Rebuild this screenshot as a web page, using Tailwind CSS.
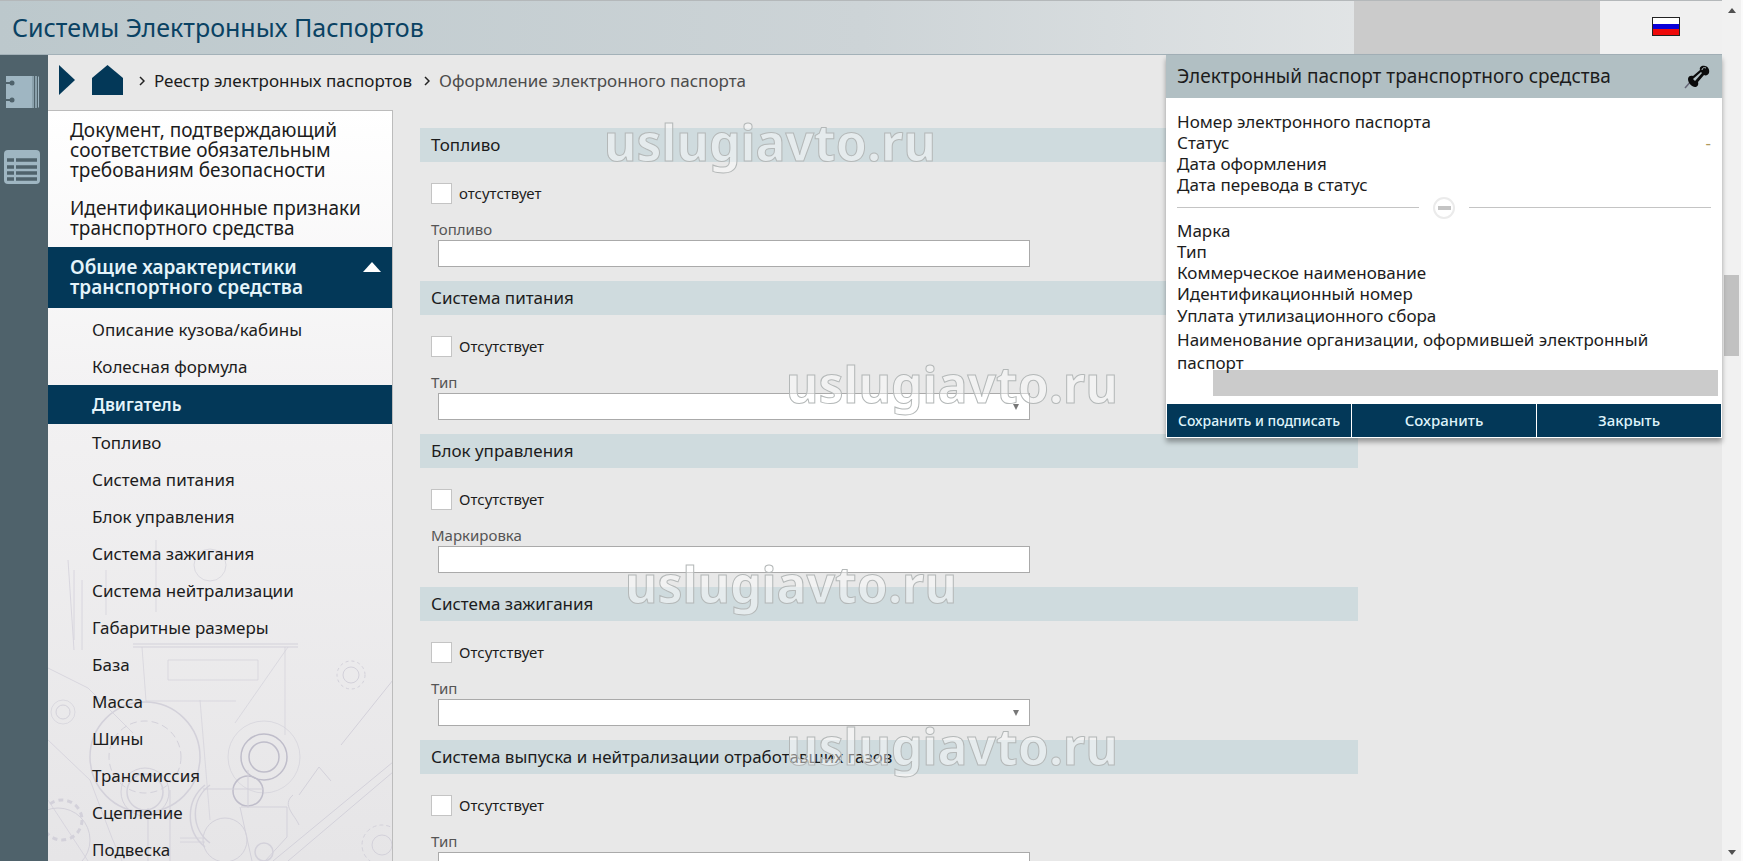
<!DOCTYPE html>
<html lang="ru">

<head>
  <meta charset="UTF-8">
  <meta name="viewport" content="width=device-width, initial-scale=1.0">
  <title>Системы Электронных Паспортов</title>
  <script src="https://cdn.jsdelivr.net/npm/@tailwindcss/browser@4"></script>
</head>

<body class="h-screen overflow-hidden bg-[#e8e8e8] font-['Noto_Sans','Open_Sans',sans-serif] text-[#1c1c1c]">
  <div class="relative flex h-full">
    <div class="flex min-w-0 flex-1 flex-col">

      <!-- Header -->
      <header class="flex h-[55px] shrink-0 border-t border-b border-t-[#b4b8ba] border-b-[#a3b1b8] bg-linear-to-r from-[#bcc8cc] via-[#cdd4d7] to-[#f0f0f0]">
        <h1 class="flex-1 pl-3 text-[25px] leading-[52px] text-[#0a4263]">Системы Электронных Паспортов</h1>
        <div class="w-[246px] bg-[#cbcbcb]"></div>
        <div class="flex w-[122px] bg-[#f0f0f0] pt-4 pl-[52px]">
          <button type="button" aria-label="Русский" class="flex h-[19px] w-7 flex-col border border-[#222]">
            <span class="w-full flex-1 bg-white"></span>
            <span class="w-full flex-1 bg-[#0a00d8]"></span>
            <span class="w-full flex-1 bg-[#ee0a0a]"></span>
          </button>
        </div>
      </header>

      <div class="flex min-h-0 flex-1">
        <!-- Icon rail -->
        <aside class="flex w-12 shrink-0 flex-col items-center gap-10 bg-[#4f626b] pt-[19px]">
          <button type="button" aria-label="Журнал" class="pr-1">
            <svg width="36" height="36" viewBox="0 0 36 36">
              <path d="M2 2h26v32H2z" fill="#9fb6c2" />
              <path d="M29 2v32M32 2v32" stroke="#9fb6c2" stroke-width="1.500" />
              <path d="M34 2.500h1v31h-1z" fill="#9fb6c2" />
              <path d="M1 9h7M1 26h7" stroke="#4f626b" stroke-width="2" />
              <circle cx="8" cy="9" r="2.500" fill="#4f626b" />
              <circle cx="8" cy="26" r="2.500" fill="#4f626b" />
            </svg>
          </button>
          <button type="button" aria-label="Реестр" class="pr-1">
            <svg width="36" height="34" viewBox="0 0 36 34">
              <rect x="0" y="0" width="36" height="34" rx="4" fill="#9fb6c2" />
              <path d="M3 10h7M3 17h7M3 23h7M3 29h7M12 10h21M12 17h21M12 23h21M12 29h21" stroke="#4f626b" stroke-width="3.500" />
            </svg>
          </button>
        </aside>

        <div class="flex min-w-0 flex-1 flex-col">
          <!-- Breadcrumbs -->
          <nav aria-label="Навигация" class="flex h-[55px] shrink-0 items-center pb-[6px] pl-[11px] text-[17px]">
            <button type="button" aria-label="Развернуть">
              <svg width="16" height="30" viewBox="0 0 16 30"><path d="M0 0l16 15L0 30z" fill="#033858" /></svg>
            </button>
            <a href="#" aria-label="Главная" class="ml-[17px]">
              <svg width="31" height="30" viewBox="0 0 31 30"><path d="M15.500 0L31 13v17H0V13z" fill="#033858" /></svg>
            </a>
            <svg class="mt-0.5 ml-4" width="6" height="10" viewBox="0 0 6 10" fill="none" stroke="#222" stroke-width="1.500"><path d="M1 1l4 4-4 4" /></svg>
            <a href="#" class="mt-0.5 ml-[9px]">Реестр электронных паспортов</a>
            <svg class="mt-0.5 ml-3" width="6" height="10" viewBox="0 0 6 10" fill="none" stroke="#222" stroke-width="1.500"><path d="M1 1l4 4-4 4" /></svg>
            <span class="mt-0.5 ml-[9px] text-[#4c4c4c]">Оформление электронного паспорта</span>
          </nav>

          <div class="flex min-h-0 flex-1">
            <!-- Side menu -->
            <nav aria-label="Разделы" class="relative w-[345px] shrink-0 overflow-hidden border-t border-r border-[#bcbcbc] bg-linear-to-b from-white via-[#f2f1f2] via-40% to-[#e6e5e7]">
              <svg class="absolute bottom-0 left-0" width="345" height="321" viewBox="0 0 345 321" fill="none" stroke="#d3d1da" stroke-width="1">
                <circle cx="97" cy="217" r="55" stroke-width="1.500" />
                <circle cx="97" cy="217" r="36" stroke-dasharray="7 4" />
                <circle cx="97" cy="252" r="24" />
                <circle cx="97" cy="252" r="18" stroke-width="1.500" />
                <circle cx="216" cy="217" r="36" stroke-width=".7" />
                <circle cx="216" cy="217" r="23" stroke="#bfbdca" stroke-width="1.500" />
                <circle cx="216" cy="217" r="15" stroke="#bfbdca" stroke-width="1.500" />
                <circle cx="200" cy="251" r="15" stroke="#bfbdca" stroke-width="1.500" />
                <path d="M155 249h60M200 230v38M85 104h165M85 107h165" />
                <path d="M94 107l4 54h90M240 107l-53 76M237 107v88M58 30v45M108 0v72M152 160l10 120M120 120h90v20h-90z" stroke-width=".7" />
                <path d="M345 140l-52 65M345 222L225 321M345 232L240 321M192 267l12 54M193 267h46v30l-22 24" />
                <path d="M0 128l40 20 45 45M0 200l42 40 22 58 10 23M0 260l40 61M132 298h25M132 302h25M20 20l6 90M26 30v70M34 40v70" stroke-width=".8" />
                <circle cx="162" cy="25" r="16" stroke-width=".7" />
                <circle cx="303" cy="135" r="8" />
                <circle cx="303" cy="135" r="14" stroke-dasharray="3 3" />
                <circle cx="15" cy="172" r="7" />
                <circle cx="15" cy="172" r="12" stroke-width=".7" />
                <path d="M162 245a36 36 0 0 0 0 58M157 245a40 40 0 0 0 0 62" stroke-width="1.500" />
                <circle cx="177" cy="300" r="22" />
                <circle cx="216" cy="312" r="9" stroke-width="1.500" />
                <circle cx="334" cy="305" r="20" stroke-dasharray="4 3" />
                <circle cx="334" cy="305" r="10" />
                <circle cx="14" cy="280" r="20" stroke-dasharray="5 4" stroke-width="3" />
                <circle cx="10" cy="300" r="32" />
                <path d="M100 268v53M122 250v71M245 255c-12 10 2 20 6 30M251 255l20-28 12 14" />
              </svg>
              <div class="relative text-[19px] leading-5">
                <a href="#" class="block py-[9px] pr-8 pl-[22px]">Документ, подтверждающий соответствие обязательным требованиям безопасности</a>
                <a href="#" class="block py-[9px] pr-6 pl-[22px]">Идентификационные признаки транспортного средства</a>
                <a href="#" class="flex justify-between bg-[#033858] pt-[10px] pr-[11px] pb-[11px] pl-[22px] font-semibold text-[#e4f4fa]">
                  <span class="w-64">Общие характеристики транспортного средства</span>
                  <svg class="mt-[5px]" width="18" height="10" viewBox="0 0 18 10"><path d="M9 0l9 10H0z" fill="#fff" /></svg>
                </a>
              </div>
              <ul class="relative pt-[3px] text-[17px] leading-[37px]">
                <li><a href="#" class="block pl-11">Описание кузова/кабины</a></li>
                <li><a href="#" class="block pl-11">Колесная формула</a></li>
                <li><a href="#" aria-current="page" class="block bg-[#033858] py-px pl-11 font-semibold text-[#e4f4fa]">Двигатель</a></li>
                <li><a href="#" class="block pl-11">Топливо</a></li>
                <li><a href="#" class="block pl-11">Система питания</a></li>
                <li><a href="#" class="block pl-11">Блок управления</a></li>
                <li><a href="#" class="block pl-11">Система зажигания</a></li>
                <li><a href="#" class="block pl-11">Система нейтрализации</a></li>
                <li><a href="#" class="block pl-11">Габаритные размеры</a></li>
                <li><a href="#" class="block pl-11">База</a></li>
                <li><a href="#" class="block pl-11">Масса</a></li>
                <li><a href="#" class="block pl-11">Шины</a></li>
                <li><a href="#" class="block pl-11">Трансмиссия</a></li>
                <li><a href="#" class="block pl-11">Сцепление</a></li>
                <li><a href="#" class="block pl-11">Подвеска</a></li>
              </ul>
            </nav>

            <!-- Form -->
            <main class="min-w-0 flex-1 overflow-hidden pt-[18px] pl-[27px]">
              <form class="max-w-[938px]">
                <section class="pb-[14px]">
                  <h2 class="bg-[#cfdbde] pl-[11px] text-[17px] leading-[34px]">Топливо</h2>
                  <div class="mt-5 flex h-[22px] items-center gap-[7px] pl-[11px] text-[15px]">
                    <input type="checkbox" id="fuelNone" class="size-[21px] appearance-none border border-[#c4c4c4] bg-white">
                    <label for="fuelNone">отсутствует</label>
                  </div>
                  <label for="fuel" class="mt-[15px] block pl-[11px] text-[15px] leading-[21px] text-[#555]">Топливо</label>
                  <input type="text" id="fuel" class="ml-[18px] block h-[27px] w-[592px] border border-[#aaa] bg-white px-2">
                </section>

                <section class="pb-[14px]">
                  <h2 class="bg-[#cfdbde] pl-[11px] text-[17px] leading-[34px]">Система питания</h2>
                  <div class="mt-5 flex h-[22px] items-center gap-[7px] pl-[11px] text-[15px]">
                    <input type="checkbox" id="feedNone" class="size-[21px] appearance-none border border-[#c4c4c4] bg-white">
                    <label for="feedNone">Отсутствует</label>
                  </div>
                  <label for="feedType" class="mt-[15px] block pl-[11px] text-[15px] leading-[21px] text-[#555]">Тип</label>
                  <div class="relative ml-[18px] w-[592px]">
                    <select id="feedType" class="block h-[27px] w-full appearance-none border border-[#aaa] bg-white px-2"><option></option></select>
                    <svg class="pointer-events-none absolute top-[11px] right-[11px]" width="6" height="6" viewBox="0 0 6 6"><path d="M0 0h6L3 6z" fill="#777" /></svg>
                  </div>
                </section>

                <section class="pb-[14px]">
                  <h2 class="bg-[#cfdbde] pl-[11px] text-[17px] leading-[34px]">Блок управления</h2>
                  <div class="mt-5 flex h-[22px] items-center gap-[7px] pl-[11px] text-[15px]">
                    <input type="checkbox" id="controlNone" class="size-[21px] appearance-none border border-[#c4c4c4] bg-white">
                    <label for="controlNone">Отсутствует</label>
                  </div>
                  <label for="controlMark" class="mt-[15px] block pl-[11px] text-[15px] leading-[21px] text-[#555]">Маркировка</label>
                  <input type="text" id="controlMark" class="ml-[18px] block h-[27px] w-[592px] border border-[#aaa] bg-white px-2">
                </section>

                <section class="pb-[14px]">
                  <h2 class="bg-[#cfdbde] pl-[11px] text-[17px] leading-[34px]">Система зажигания</h2>
                  <div class="mt-5 flex h-[22px] items-center gap-[7px] pl-[11px] text-[15px]">
                    <input type="checkbox" id="ignitionNone" class="size-[21px] appearance-none border border-[#c4c4c4] bg-white">
                    <label for="ignitionNone">Отсутствует</label>
                  </div>
                  <label for="ignitionType" class="mt-[15px] block pl-[11px] text-[15px] leading-[21px] text-[#555]">Тип</label>
                  <div class="relative ml-[18px] w-[592px]">
                    <select id="ignitionType" class="block h-[27px] w-full appearance-none border border-[#aaa] bg-white px-2"><option></option></select>
                    <svg class="pointer-events-none absolute top-[11px] right-[11px]" width="6" height="6" viewBox="0 0 6 6"><path d="M0 0h6L3 6z" fill="#777" /></svg>
                  </div>
                </section>

                <section class="pb-[14px]">
                  <h2 class="bg-[#cfdbde] pl-[11px] text-[17px] leading-[34px]">Система выпуска и нейтрализации отработавших газов</h2>
                  <div class="mt-5 flex h-[22px] items-center gap-[7px] pl-[11px] text-[15px]">
                    <input type="checkbox" id="exhaustNone" class="size-[21px] appearance-none border border-[#c4c4c4] bg-white">
                    <label for="exhaustNone">Отсутствует</label>
                  </div>
                  <label for="exhaustType" class="mt-[15px] block pl-[11px] text-[15px] leading-[21px] text-[#555]">Тип</label>
                  <div class="relative ml-[18px] w-[592px]">
                    <select id="exhaustType" class="block h-[27px] w-full appearance-none border border-[#aaa] bg-white px-2"><option></option></select>
                    <svg class="pointer-events-none absolute top-[11px] right-[11px]" width="6" height="6" viewBox="0 0 6 6"><path d="M0 0h6L3 6z" fill="#777" /></svg>
                  </div>
                </section>
              </form>
            </main>
          </div>
        </div>
      </div>
    </div>

    <!-- Scrollbar -->
    <div class="flex w-[21px] shrink-0 flex-col items-center border-r-2 border-[#fafafa] bg-[#f1f1f1] pt-2 pb-1.5">
      <svg width="8" height="5" viewBox="0 0 8 5"><path d="M4 0l4 5H0z" fill="#505050" /></svg>
      <div class="relative w-[15px] flex-1">
        <div class="absolute top-[262px] h-[81px] w-full bg-[#c1c1c1]"></div>
      </div>
      <svg width="8" height="5" viewBox="0 0 8 5"><path d="M0 0h8L4 5z" fill="#505050" /></svg>
    </div>

    <!-- Passport panel -->
    <section class="absolute top-[55px] right-[21px] w-[556px] bg-white shadow-[0_4px_5px_rgba(0,0,0,0.35)]">
      <div class="flex h-[43px] items-center justify-between bg-[#b1bfc3] pr-3 pl-[11px]">
        <h2 class="text-[19px]">Электронный паспорт транспортного средства</h2>
        <button type="button" aria-label="Закрепить">
          <svg width="26" height="24" viewBox="0 0 26 24">
            <path d="M1 23l7-8" stroke="#667" stroke-width="1.500" />
            <path d="M4 14c0-3 3-4 5-3l7-6c-1-3 2-5 5-4 3 0 5 4 4 7-1 2-3 3-5 2l-6 7c1 3-1 5-3 5-3 0-7-4-7-8z" fill="#0b0b0b" />
            <path d="M9 14l8-7 1 1-7 8z" fill="#b1bfc3" />
            <path d="M18 5c0-2 2-3 4-2" stroke="#b1bfc3" fill="none" />
          </svg>
        </button>
      </div>
      <div class="px-[11px] pt-[13px] text-[17px] leading-[21px]">
        <p>Номер электронного паспорта</p>
        <p class="flex justify-between">Статус <span class="text-[#b09a5c]">-</span></p>
        <p>Дата оформления</p>
        <p>Дата перевода в статус</p>
        <div class="flex h-[25px] items-center gap-[14px]">
          <span class="h-px flex-1 bg-[#c4c4c4]"></span>
          <button type="button" aria-label="Свернуть" class="flex size-[22px] items-center justify-center rounded-full border-2 border-[#ebebeb]"><span class="h-1 w-[13px] bg-[#c4c4c4]"></span></button>
          <span class="h-px flex-1 bg-[#c4c4c4]"></span>
        </div>
        <p>Марка</p>
        <p>Тип</p>
        <p>Коммерческое наименование</p>
        <p>Идентификационный номер</p>
        <p class="leading-6">Уплата утилизационного сбора</p>
        <p class="leading-[23px]">Наименование организации, оформившей электронный паспорт</p>
      </div>
      <div class="-mt-1 mr-1 ml-[47px] h-[26px] bg-[#cbcbcb]"></div>
      <div class="mt-[7px] flex gap-px border border-white text-[15px] font-medium text-[#dff3fa]">
        <button type="button" class="h-[33px] flex-1 bg-[#033858] text-sm">Сохранить и подписать</button>
        <button type="button" class="h-[33px] flex-1 bg-[#033858]">Сохранить</button>
        <button type="button" class="h-[33px] flex-1 bg-[#033858]">Закрыть</button>
      </div>
    </section>

    <!-- Watermarks -->
    <div aria-hidden="true" class="pointer-events-none absolute inset-0 overflow-hidden text-[50px] leading-[60px] font-bold text-white/45 select-none [-webkit-text-stroke:1px_#b4b8b8]">
      <span class="absolute top-[112px] left-[604px]">uslugiavto.ru</span>
      <span class="absolute top-[354px] left-[786px]">uslugiavto.ru</span>
      <span class="absolute top-[554px] left-[625px]">uslugiavto.ru</span>
      <span class="absolute top-[716px] left-[786px]">uslugiavto.ru</span>
    </div>
  </div>
</body>

</html>
